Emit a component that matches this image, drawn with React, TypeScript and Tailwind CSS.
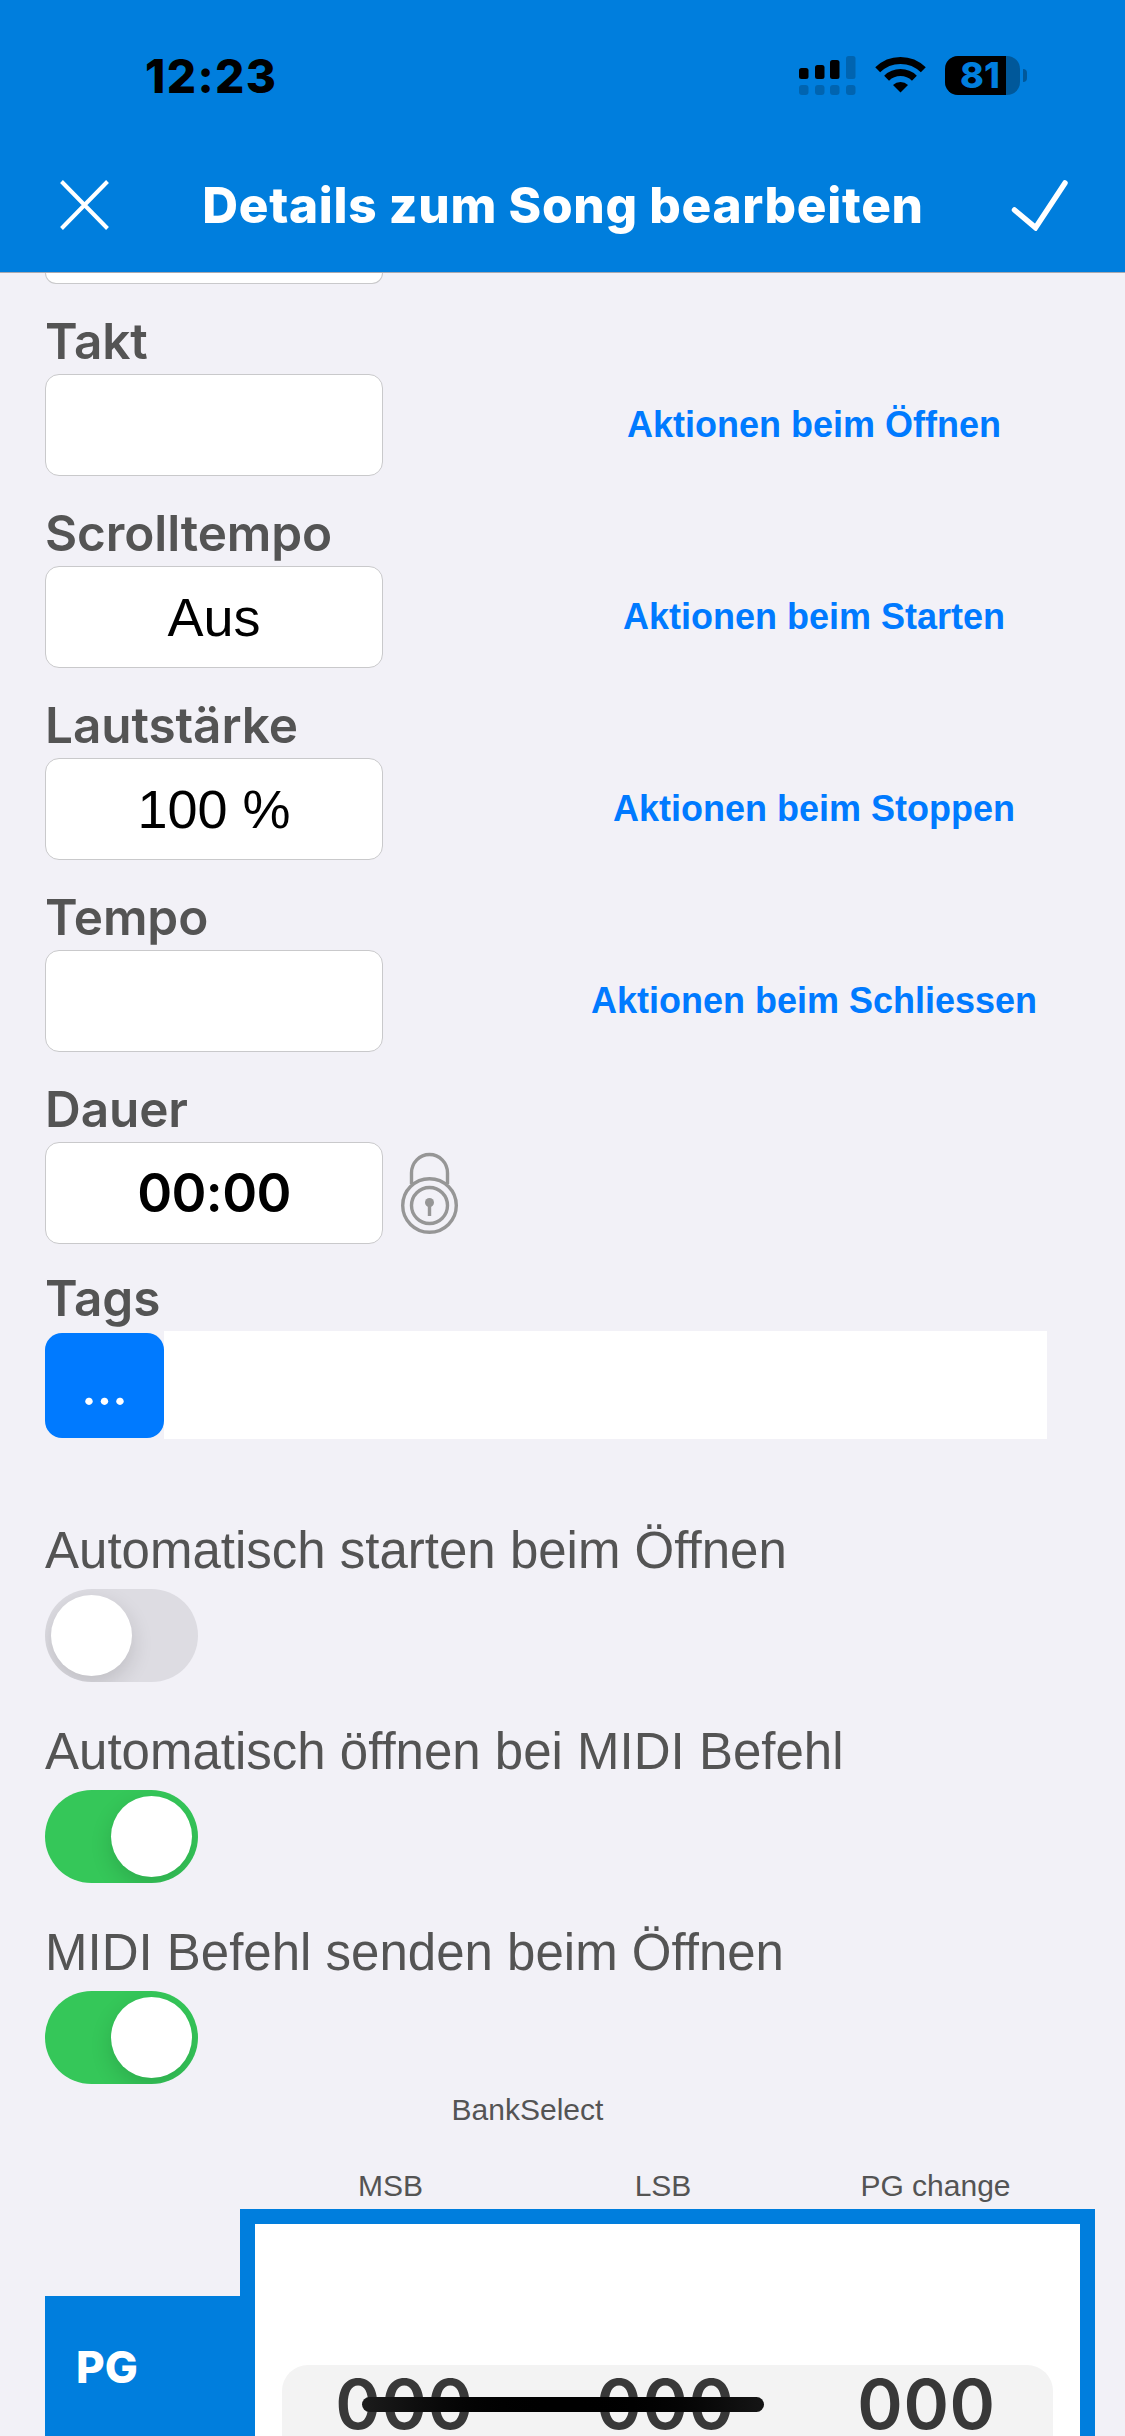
import type { ReactNode } from "react";

const FieldLabel = ({ children }: { children: ReactNode }) => (
    <div className="h-[90px] pt-[27px] font-['Inter',sans-serif] text-[49.5px] leading-[60px] font-semibold tracking-[-0.1px] text-[#545454]">
        {children}
    </div>
);

const FieldBox = ({ children }: { children?: ReactNode }) => (
    <div className="flex h-[102px] w-[338px] items-center justify-center rounded-[14px] border border-[#c9c9cb] bg-white text-black">
        {children}
    </div>
);

const FieldRow = ({ label, value, action }: { label: string; value?: string; action: string }) => (
    <div>
        <FieldLabel>{label}</FieldLabel>
        <div className="flex">
            <FieldBox>
                {value && <span className="text-[54px] leading-[60px]">{value}</span>}
            </FieldBox>
            <div className="ml-[181px] flex h-[102px] w-[500px] items-center justify-center text-[36px] leading-[40px] font-bold whitespace-nowrap text-[#007aff]">
                {action}
            </div>
        </div>
    </div>
);

const ToggleRow = ({ label, on }: { label: string; on?: boolean }) => (
    <div className="h-[201px]">
        <div className="text-[51px] leading-[60px] whitespace-nowrap text-[#545454]">{label}</div>
        <div
            className={`mt-[8px] flex h-[93px] w-[153px] items-center overflow-hidden rounded-full px-[6px] ${
                on ? "justify-end bg-[#35c759]" : "justify-start bg-[#dddce2]"
            }`}
        >
            <div className="size-[81px] rounded-full bg-white shadow-[0_8px_22px_rgba(0,0,0,0.14)]" />
        </div>
    </div>
);

const SignalIcon = () => (
    <svg width="57" height="39" viewBox="0 0 57 39">
        <rect x="0" y="12" width="9.5" height="11" rx="2.5" />
        <rect x="16" y="9" width="9.5" height="14" rx="2.5" />
        <rect x="31" y="4" width="9.5" height="19" rx="2.5" />
        <g opacity="0.2">
            <rect x="47" y="0" width="9.5" height="23" rx="2.5" />
            <rect x="0" y="29" width="9.5" height="10" rx="3" />
            <rect x="16" y="29" width="9.5" height="10" rx="3" />
            <rect x="31" y="29" width="9.5" height="10" rx="3" />
            <rect x="47" y="29" width="9.5" height="10" rx="3" />
        </g>
    </svg>
);

const WifiIcon = () => (
    <svg width="51" height="37" viewBox="0 0 51 37">
        <path d="M25.5 36.5 L18 29 A10.8 10.8 0 0 1 33 29 Z" />
        <path d="M11.6 22.2 A20 20 0 0 1 39.4 22.2" fill="none" stroke="#000" strokeWidth="7" />
        <path d="M2.7 13.8 A32.5 32.5 0 0 1 48.3 13.8" fill="none" stroke="#000" strokeWidth="7" />
    </svg>
);

const Battery = () => (
    <div className="flex items-center">
        <div className="flex h-[39px] w-[75px] overflow-hidden rounded-[13px] bg-black/30">
            <div className="flex w-[61px] items-center bg-black pl-[15px] font-['Inter',sans-serif] text-[36px] leading-[39px] font-extrabold text-[#007edd]">
                81
            </div>
        </div>
        <div className="ml-[3px] h-[13px] w-[4px] rounded-r-full bg-black/30" />
    </div>
);

const LockIcon = () => (
    <svg width="57" height="82" viewBox="0 0 57 82" fill="none" stroke="#969696" strokeWidth="3.4">
        <path d="M10.5 32 V21 A18 18.5 0 0 1 46.5 21 V32" />
        <circle cx="28.5" cy="53.5" r="26.8" />
        <circle cx="28.5" cy="53.5" r="18" />
        <circle cx="28.5" cy="50.5" r="4.5" fill="#969696" stroke="none" />
        <path d="M28.5 50 V64" />
    </svg>
);

const PickerValue = ({ children }: { children: ReactNode }) => (
    <div className="w-[261px] text-center font-['Inter',sans-serif] text-[69px] leading-[80px] font-semibold tracking-[0.6px] text-[#383838]">
        {children}
    </div>
);

export default function App() {
    return (
        <div className="relative h-[2436px] w-[1125px] overflow-hidden bg-[#f2f1f7] font-['Liberation_Sans',sans-serif]">
            <header className="h-[273px] border-b border-[#a9a9b0] bg-[#007edd]">
                <div className="flex h-[150px] items-start pl-[145px]">
                    <div className="w-[654px] pt-[48px] font-['Inter',sans-serif] text-[46px] leading-[56px] font-extrabold tracking-[1.4px] text-black">
                        12:23
                    </div>
                    <div className="flex pt-[56px]">
                        <SignalIcon />
                        <div className="ml-[19px]">
                            <WifiIcon />
                        </div>
                        <div className="ml-[19px]">
                            <Battery />
                        </div>
                    </div>
                </div>
                <div className="flex h-[110px] items-center justify-between pr-[57px] pl-[60px]">
                    <svg width="49" height="50" viewBox="0 0 49 50" stroke="#fff" strokeWidth="4">
                        <path d="M1.5 1.5 L47.5 48.5 M47.5 1.5 L1.5 48.5" />
                    </svg>
                    <h1 className="pl-[6px] font-['Inter',sans-serif] text-[49.5px] leading-[60px] font-extrabold tracking-[0.7px] whitespace-nowrap text-white">
                        Details zum Song bearbeiten
                    </h1>
                    <svg width="57" height="52" viewBox="0 0 57 52" fill="none" stroke="#fff" strokeWidth="5.5" strokeLinecap="round">
                        <path d="M3.5 31 L24.5 48.7 L54 4" />
                    </svg>
                </div>
            </header>

            <main className="pl-[45px]">
                <div className="h-[11px] w-[338px] rounded-b-[14px] border border-t-0 border-[#c9c9cb] bg-white" />

                <FieldRow label="Takt" action="Aktionen beim Öffnen" />
                <FieldRow label="Scrolltempo" value="Aus" action="Aktionen beim Starten" />
                <FieldRow label="Lautstärke" value="100 %" action="Aktionen beim Stoppen" />
                <FieldRow label="Tempo" action="Aktionen beim Schliessen" />

                <FieldLabel>Dauer</FieldLabel>
                <div className="flex items-center">
                    <FieldBox>
                        <span className="font-['Inter',sans-serif] text-[53px] leading-[60px] font-semibold tracking-[-0.6px]">
                            00:00
                        </span>
                    </FieldBox>
                    <div className="ml-[18px]">
                        <LockIcon />
                    </div>
                </div>

                <div className="-mt-[3px]">
                    <FieldLabel>Tags</FieldLabel>
                </div>
                <div className="flex h-[108px] items-center">
                    <button className="h-[105px] w-[119px] rounded-[17px] bg-[#007aff] pt-[3px] font-['Inter',sans-serif] text-[51px] leading-[60px] font-medium text-white">
                        ...
                    </button>
                    <div className="h-[108px] w-[883px] bg-white" />
                </div>

                <div className="mt-[82px]">
                    <ToggleRow label="Automatisch starten beim Öffnen" />
                    <ToggleRow label="Automatisch öffnen bei MIDI Befehl" on />
                    <ToggleRow label="MIDI Befehl senden beim Öffnen" on />
                </div>

                <div className="-mt-[32px] text-[30px] leading-[36px] text-[#545454]">
                    <div className="ml-[352px] w-[261px] text-center">BankSelect</div>
                    <div className="mt-[40px] ml-[215px] flex text-center">
                        <div className="w-[261px]">MSB</div>
                        <div className="w-[284px]">LSB</div>
                        <div className="w-[261px]">PG change</div>
                    </div>
                </div>

                <div className="mt-[5px] flex">
                    <div className="mt-[87px] h-[160px] w-[195px] bg-[#007edd] pt-[44px] pl-[31px] font-['Inter',sans-serif] text-[44px] leading-[54px] font-extrabold text-white">
                        PG
                    </div>
                    <div className="h-[260px] w-[855px] border-[15px] border-[#007edd] bg-white pt-[141px] pl-[27px]">
                        <div className="flex h-[96px] w-[771px] rounded-[26px] bg-[#f3f3f3]">
                            <div className="-mt-px -ml-[8px] flex">
                                <PickerValue>000</PickerValue>
                                <PickerValue>000</PickerValue>
                                <PickerValue>000</PickerValue>
                            </div>
                        </div>
                    </div>
                </div>
            </main>

            {/* home indicator */}
            <div className="absolute top-[2397px] left-[362px] h-[15px] w-[402px] rounded-full bg-linear-to-r from-[#1c1c1c] via-black to-[#151515]" />
        </div>
    );
}
